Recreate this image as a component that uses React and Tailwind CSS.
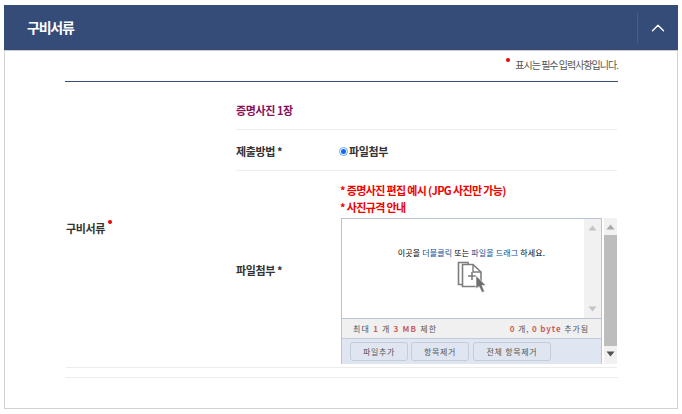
import React from "react";
import { ChevronUp } from "lucide-react";

const font = { fontFamily: '"Noto Sans CJK KR", "Noto Sans", sans-serif' };

function Arrow({ up, className }) {
  return (
    <svg width="9" height="6" viewBox="0 0 9 6" className={className}>
      <path d={up ? "M4.5 0.5 L8.5 5.5 L0.5 5.5 Z" : "M0.5 0.5 L8.5 0.5 L4.5 5.5 Z"} fill="currentColor" />
    </svg>
  );
}

function DropIcon() {
  return (
    <svg width="30" height="32" viewBox="0 0 30 32" fill="none">
      <path d="M11 4.5V1.5H1.5V23.5H5" stroke="#7d7d7d" strokeWidth="1.6" />
      <path d="M5.5 3.5H16L24 11V25.5H5.5Z" fill="#fff" stroke="#7d7d7d" strokeWidth="1.6" />
      <path d="M16 3.5V11H24" stroke="#7d7d7d" strokeWidth="1.4" />
      <path d="M11 15H19M15 11V19" stroke="#7d7d7d" strokeWidth="1.6" />
      <path d="M19 14.5V28L22 25.3L25 31.5L27.5 30.5L25 24.5H29Z" fill="#6f6f6f" stroke="#fff" strokeWidth="0.6" />
    </svg>
  );
}

function Uploader() {
  return (
    <div className="ml-px flex h-[146px] w-[276px] overflow-hidden">
      <div className="flex w-[261px] shrink-0 flex-col border-x border-t border-[#b8c3d6]">
        <div className="flex h-[100px] border-b border-[#b8c3d6]">
          <div className="flex flex-1 flex-col items-center pt-[28px] pl-[17px]">
            <div className="text-[8px] leading-[12px] tracking-[0.15px] whitespace-nowrap text-black">
              이곳을 <span className="text-[#0b4a94]">더블클릭</span> 또는 <span className="text-[#0b4a94]">파일을 드래그</span> 하세요.
            </div>
            <div className="mt-[2px]"><DropIcon /></div>
          </div>
          <div className="flex w-[17px] flex-col items-center justify-between bg-[#f1f1f1] py-[6px] text-[#c4c4c4]">
            <Arrow up />
            <Arrow />
          </div>
        </div>
        <div className="flex h-[20px] items-center justify-between border-b border-[#c3ccdb] bg-[#f0f0f0] pr-[12px] pl-[11px] text-[8px] text-[#555]">
          <span className="tracking-[1.2px]">최대 <b className="text-[#c95c5c]">1</b> 개 <b className="text-[#c95c5c]">3 MB</b> 제한</span>
          <span className="tracking-[0.9px]"><b className="text-[#c95c5c]">0</b> 개, <b className="text-[#c95c5c]">0 byte</b> 추가됨</span>
        </div>
        <div className="flex flex-1 gap-[3px] bg-[#dfe6f1] pt-[3px] pl-[8px] text-[8px] tracking-[0.7px] text-[#555]">
          <button className="h-[19px] w-[58px] rounded-[3px] border border-[#c3ccdb]">파일추가</button>
          <button className="h-[19px] w-[58px] rounded-[3px] border border-[#c3ccdb]">항목제거</button>
          <button className="ml-px h-[19px] w-[78px] rounded-[3px] border border-[#c3ccdb]">전체 항목제거</button>
        </div>
      </div>
      <div className="ml-[2px] flex w-[13px] flex-col items-center bg-[#f1f1f1]">
        <Arrow up className="mt-[6px] text-[#a8a8a8]" />
        <div className="mt-[5px] h-[111px] w-full bg-[#bdbdbd]" />
        <Arrow className="mt-[5px] text-[#505050]" />
      </div>
    </div>
  );
}

export default function App() {
  return (
    <div className="h-[414px] w-[682px] overflow-hidden bg-white pt-[5px] pl-[4px]" style={font}>
      <div className="w-[674px]">
        {/* Header */}
        <div className="flex h-[45px] items-center justify-between bg-[#344c77] pl-[23px]">
          <h2 className="text-[14px] font-bold tracking-[-1.2px] text-white">구비서류</h2>
          <div className="flex h-[30px] w-[41px] items-center justify-center border-l border-[#4a6088] pr-px">
            <ChevronUp className="h-[22px] w-[22px] text-white" strokeWidth={1.5} />
          </div>
        </div>

        {/* Body */}
        <div className="h-[359px] border-x border-b border-[#d2d2d2] border-t border-t-[#c9c9c9] pr-[59px] pl-[60px]">
          <div className="flex h-[30px] items-start justify-end pt-[6px] text-[10px] tracking-[-1px] text-[#555]">
            <span className="relative leading-[16px]">
              <i className="absolute top-[1px] left-[-9px] h-[4px] w-[4px] rounded-full bg-[#f00000]" />
              표시는 필수 입력사항입니다.
            </span>
          </div>
          <div className="border-t border-[#344c77] pl-px">
            <div className="mr-px flex h-[286px] border-b border-[#ececec]">
              <div className="relative flex w-[170px] items-center pt-[7px] text-[11px] font-bold tracking-[-0.4px] text-[#333]">
                <span className="relative">
                  구비서류
                  <i className="absolute top-[0px] right-[-7px] h-[4px] w-[4px] rounded-full bg-[#f00000]" />
                </span>
              </div>
              <div className="flex w-[381px] flex-col">
                <div className="flex h-[48px] items-center border-b border-[#ececec] pt-[9px] text-[11px] font-bold tracking-[-0.4px] text-[#8a0f5a]">
                  증명사진 1장
                </div>
                <div className="flex h-[41px] items-center border-b border-[#ececec] pt-[2px] text-[11px] font-bold tracking-[-0.4px] text-[#333]">
                  <span className="w-[103px]">제출방법 *</span>
                  <span className="flex items-center">
                    <span className="mr-px flex h-[9px] w-[9px] items-center justify-center rounded-full border border-[#6aa5f5]">
                      <i className="h-[5px] w-[5px] rounded-full bg-[#0a6cf0]" />
                    </span>
                    파일첨부
                  </span>
                </div>
                <div className="flex flex-1 items-start pt-[11px] text-[11px] font-bold tracking-[-0.4px] text-[#333]">
                  <span className="mt-[80px] w-[104px]">파일첨부 *</span>
                  <div>
                    <div className="leading-[17px] tracking-[-0.65px] text-[#f00000]">
                      <div>* 증명사진 편집 예시 (JPG 사진만 가능)</div>
                      <div>* 사진규격 안내</div>
                    </div>
                    <div className="mt-[2px] font-normal tracking-normal">
                      <Uploader />
                    </div>
                  </div>
                </div>
              </div>
            </div>
          </div>
          <div className="mt-[9px] border-t border-[#ececec]" />
        </div>
      </div>
    </div>
  );
}
